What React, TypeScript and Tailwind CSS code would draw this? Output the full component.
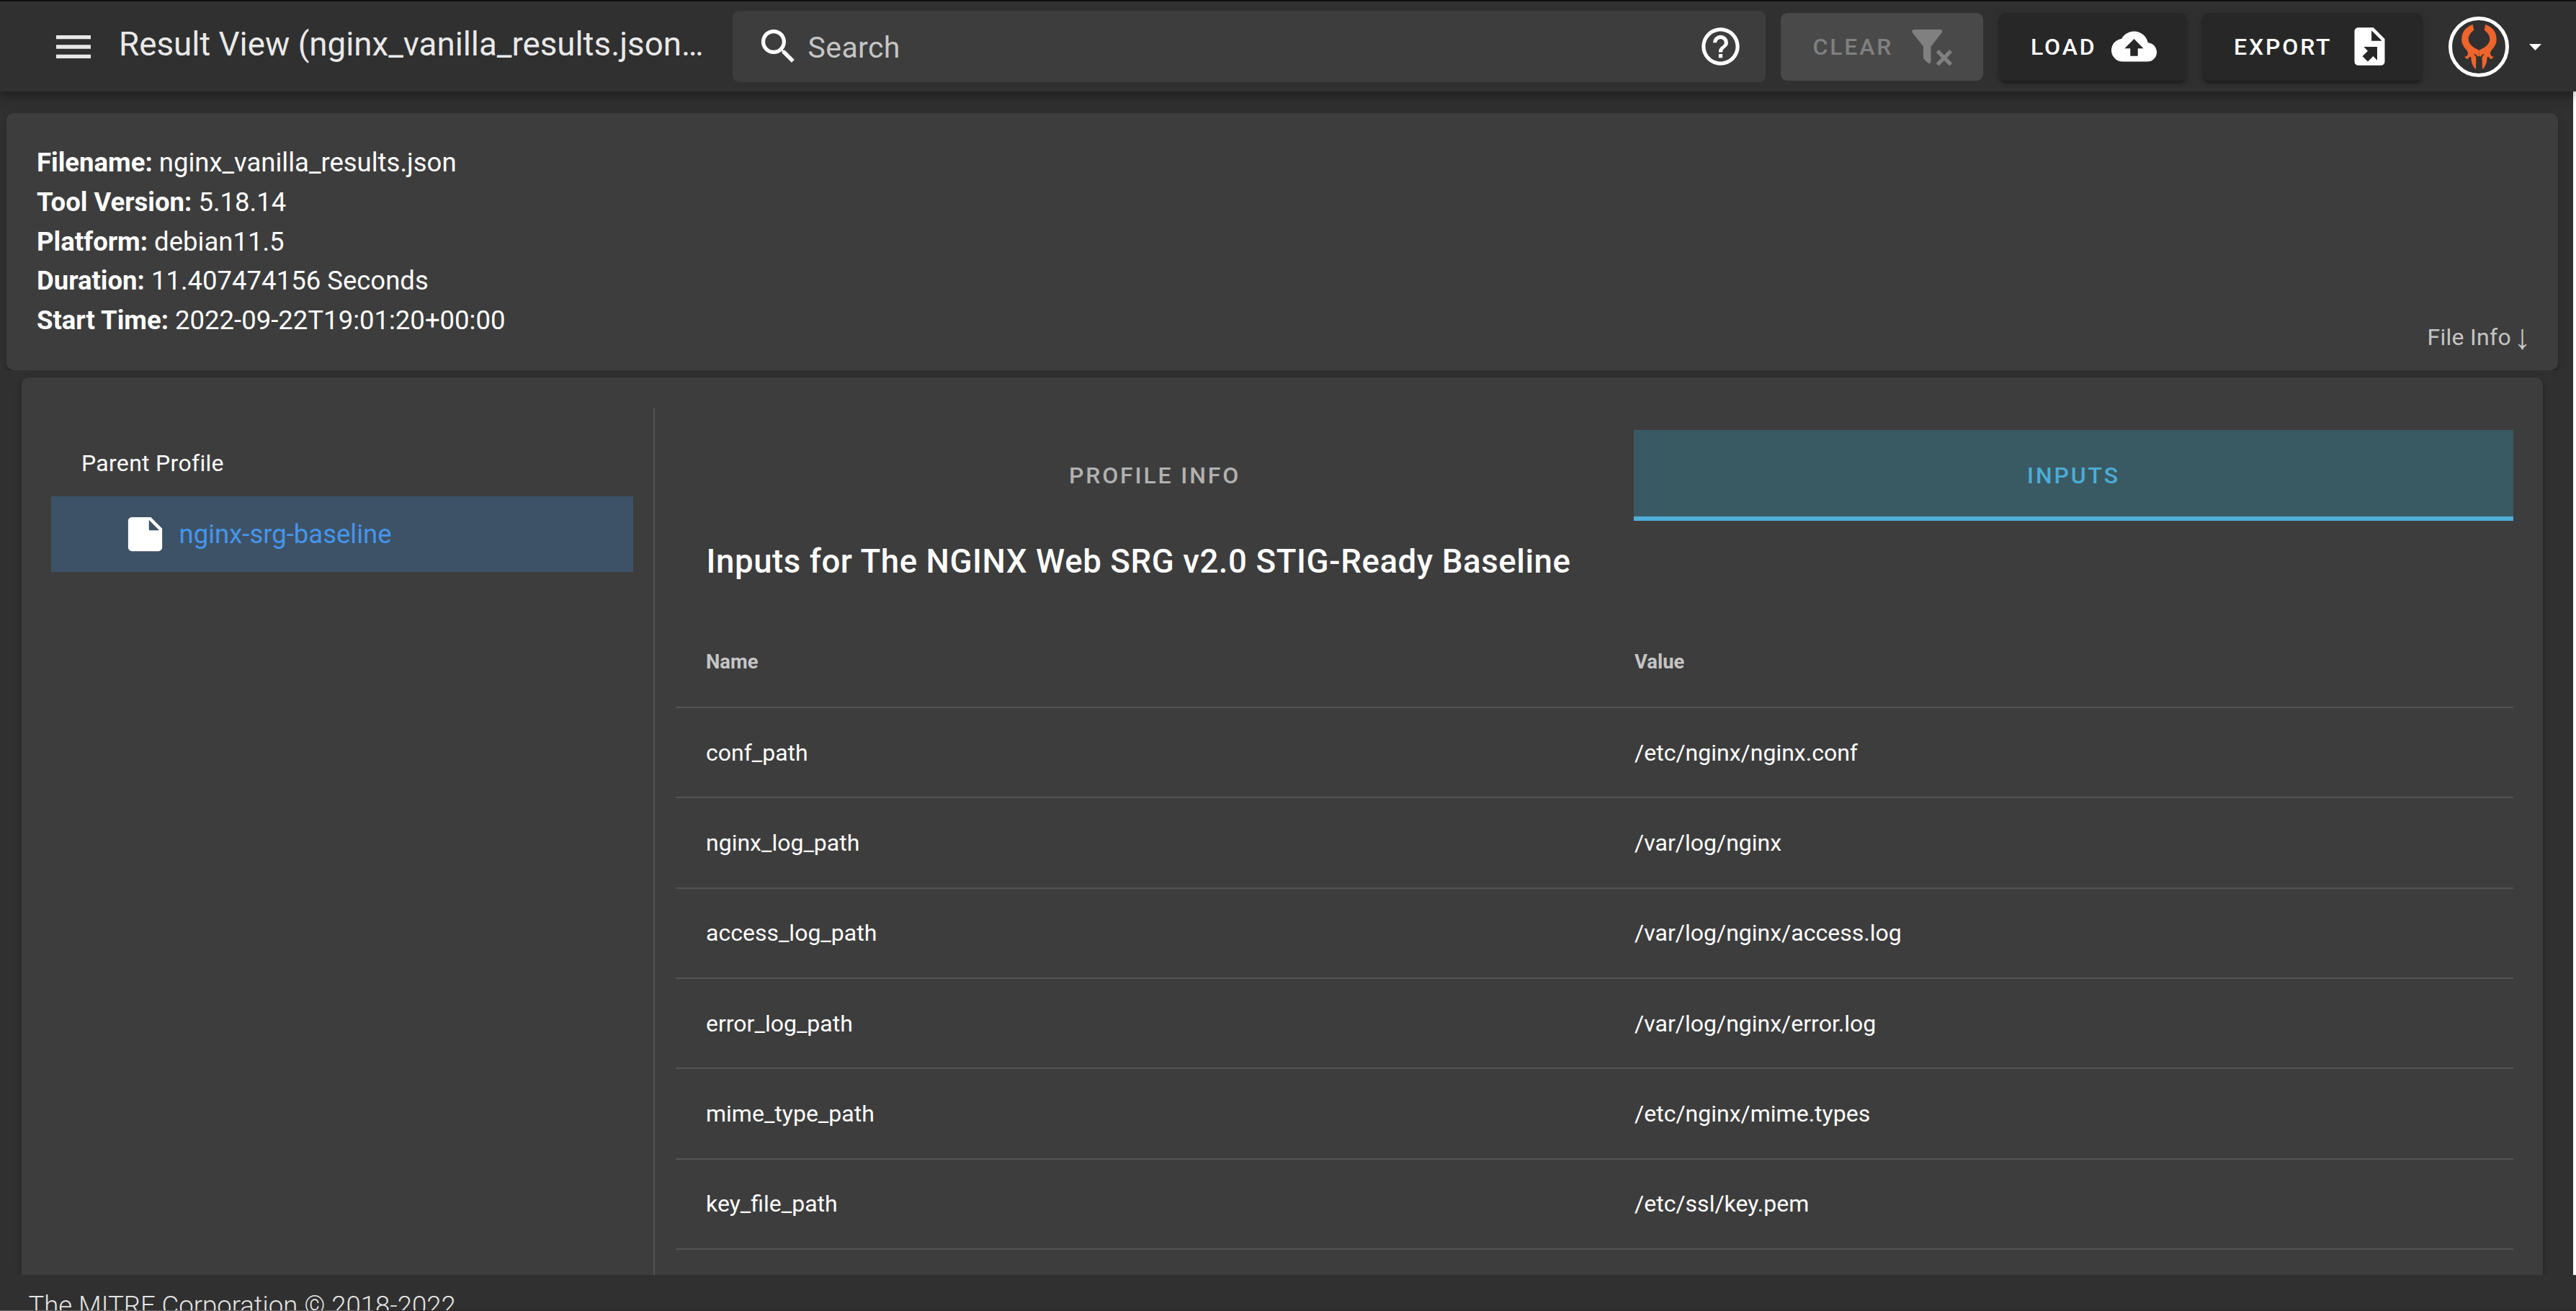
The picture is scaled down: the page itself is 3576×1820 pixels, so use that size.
import React from "react";

const icons = {
  menu: "M3,6H21V8H3V6M3,11H21V13H3V11M3,16H21V18H3V16Z",
  magnify:
    "M9.5,3A6.5,6.5 0 0,1 16,9.5C16,11.11 15.41,12.59 14.44,13.73L14.71,14H15.5L20.5,19L19,20.5L14,15.5V14.71L13.73,14.44C12.59,15.41 11.11,16 9.5,16A6.5,6.5 0 0,1 3,9.5A6.5,6.5 0 0,1 9.5,3M9.5,5C7,5 5,7 5,9.5C5,12 7,14 9.5,14C12,14 14,12 14,9.5C14,7 12,5 9.5,5Z",
  help: "M11,18H13V16H11V18M12,2A10,10 0 0,0 2,12A10,10 0 0,0 12,22A10,10 0 0,0 22,12A10,10 0 0,0 12,2M12,20C7.59,20 4,16.41 4,12C4,7.59 7.59,4 12,4C16.41,4 20,7.59 20,12C20,16.41 16.41,20 12,20M12,6A4,4 0 0,0 8,10H10A2,2 0 0,1 12,8A2,2 0 0,1 14,10C14,12 11,11.75 11,15H13C13,12.75 16,12.5 16,10A4,4 0 0,0 12,6Z",
  filterRemove:
    "M14.76,20.83L17.6,18L14.76,15.17L16.17,13.76L19,16.57L21.83,13.76L23.24,15.17L20.43,18L23.24,20.83L21.83,22.24L19,19.4L16.17,22.24L14.76,20.83M12,12V19.88C12.04,20.18 11.94,20.5 11.71,20.71C11.32,21.1 10.69,21.1 10.3,20.71L8.29,18.7C8.06,18.47 7.96,18.16 8,17.87V12H7.97L2.21,4.62C1.87,4.19 1.95,3.56 2.38,3.22C2.57,3.08 2.78,3 3,3V3H17V3C17.22,3 17.43,3.08 17.62,3.22C18.05,3.56 18.13,4.19 17.79,4.62L12.03,12H12Z",
  cloudUpload:
    "M14,13V17H10V13H7L12,8L17,13M19.35,10.03C18.67,6.59 15.64,4 12,4C9.11,4 6.6,5.64 5.35,8.03C2.34,8.36 0,10.9 0,14A6,6 0 0,0 6,20H19A5,5 0 0,0 24,15C24,12.36 21.95,10.22 19.35,10.03Z",
  fileExport:
    "M6,2C4.89,2 4,2.9 4,4V20A2,2 0 0,0 6,22H18A2,2 0 0,0 20,20V8L14,2M13,3.5L18.5,9H13M8.93,12.22H16V19.29L13.88,17.17L11.05,20L8.22,17.17L11.05,14.35",
  note: "M14,10V4.5L19.5,10M5,3C3.89,3 3,3.89 3,5V19A2,2 0 0,0 5,21H19A2,2 0 0,0 21,19V9L15,3H5Z",
};

function Icon({ path, className = "size-[63px]" }: { path: string; className?: string }) {
  return (
    <svg viewBox="0 0 24 24" fill="currentColor" className={`shrink-0 ${className}`}>
      <path fillRule="evenodd" d={path} />
    </svg>
  );
}

const HORN =
  "M156 72 L161 95 C146 106 137 120 138 135 C140 156 160 169 182.500 179 V203 L176 206 C170 196 164 194 160 196 C170 204 171 212 170 222 L169 257 L164 254 C154 242 149 228 149 208 L143 206 L136 216 L127 213 L122 206 L131 204 L136 195 L135 186 L131 179 C118 165 109 150 110 134 C110 105 125 83 156 72 Z";

function Logo() {
  return (
    <span className="flex size-[84px] shrink-0 items-center justify-center rounded-full border-[5.500px] border-white">
      <svg viewBox="73 54 219 219" className="size-[73px] shrink-0 fill-[#ee642b]">
        <path d={HORN} />
        <path d={HORN} transform="translate(365 0) scale(-1 1)" />
      </svg>
    </span>
  );
}

function BarButton({ label, path, className }: { label: string; path: string; className: string }) {
  return (
    <button
      className={`flex h-[94px] shrink-0 items-center rounded-[9px] pl-[44.500px] text-[32px] leading-[40px] font-medium tracking-[2.850px] ${className}`}
    >
      <span className="mr-[20.500px]">{label}</span>
      <Icon path={path} />
    </button>
  );
}

function TopBar() {
  return (
    <header className="relative z-10 flex h-[127px] shrink-0 items-center border-t-2 border-[#0e0e0e] bg-[#303030] shadow-[0_4.500px_9px_-2px_rgba(0,0,0,0.2),0_9px_11px_rgba(0,0,0,0.14),0_2px_23px_rgba(0,0,0,0.12)]">
      <Icon path={icons.menu} className="ml-[70px] size-[64px] text-[#e8e8e8]" />
      <h1 className="ml-[31px] w-[852px] shrink-0 pb-[5.500px] text-[45.700px] leading-[60px] whitespace-nowrap text-[#e9e9e9]">
        Result View (nginx_vanilla_results.json…
      </h1>
      <div className="flex h-[99px] w-[1434px] shrink-0 items-center rounded-[9px] bg-[#3d3d3d] text-white">
        <Icon path={icons.magnify} className="ml-[31.500px] size-[63px]" />
        <span className="ml-[10px] flex-1 pt-[3px] text-[41px] leading-[48px] tracking-[0.400px] text-[#c5c5c5]">
          Search
        </span>
        <Icon path={icons.help} className="mr-[31.500px] size-[63px]" />
      </div>
      <BarButton
        label="CLEAR"
        path={icons.filterRemove}
        className="ml-[21px] w-[281px] bg-[#494949] text-[#808080]"
      />
      <BarButton
        label="LOAD"
        path={icons.cloudUpload}
        className="ml-[21.500px] w-[261.500px] bg-[#272727] text-white shadow-[0_7px_2px_-4.500px_rgba(0,0,0,0.2),0_4.500px_4.500px_rgba(0,0,0,0.14),0_2px_11px_rgba(0,0,0,0.12)]"
      />
      <BarButton
        label="EXPORT"
        path={icons.fileExport}
        className="ml-[20.500px] w-[306.500px] bg-[#272727] text-white shadow-[0_7px_2px_-4.500px_rgba(0,0,0,0.2),0_4.500px_4.500px_rgba(0,0,0,0.14),0_2px_11px_rgba(0,0,0,0.12)]"
      />
      <button className="ml-[36px] flex items-center gap-[28px]">
        <Logo />
        <svg viewBox="0 0 17 9" className="mt-[2px] h-[9px] w-[17px] fill-white">
          <path d="M0 0H17L8.500 9Z" />
        </svg>
      </button>
    </header>
  );
}

const fileInfo: [string, string][] = [
  ["Filename", "nginx_vanilla_results.json"],
  ["Tool Version", "5.18.14"],
  ["Platform", "debian11.5"],
  ["Duration", "11.407474156 Seconds"],
  ["Start Time", "2022-09-22T19:01:20+00:00"],
];

function FileCard() {
  return (
    <div className="h-[387px] shrink-0 overflow-hidden pt-[30px] pr-[21px] pl-[9px]">
      <section className="flex h-[357px] justify-between rounded-[10px] bg-[#3d3d3d] pt-[42px] pr-[37.500px] pl-[42px] shadow-[0_7px_2px_-4.500px_rgba(0,0,0,0.2),0_4.500px_4.500px_rgba(0,0,0,0.14),0_2px_11px_rgba(0,0,0,0.12)]">
        <div className="text-[36.500px] leading-[54.750px] text-white">
          {fileInfo.map(([label, value]) => (
            <div key={label}>
              <strong className="font-bold">{label}:</strong> {value}
            </div>
          ))}
        </div>
        <button className="flex items-end gap-[3.500px] self-end pb-[25px] text-[32px] leading-[42px] tracking-[0.300px] text-[#c5c5c5]">
          <span>File Info</span>
          <span className="font-['Liberation_Serif',serif] text-[48px] leading-[42px] tracking-normal">↓</span>
        </button>
      </section>
    </div>
  );
}

function ProfileTree() {
  return (
    <aside className="mt-[42px] w-[879px] shrink-0 border-r-2 border-[#545454] pt-[53px] pr-[28px] pl-[41px]">
      <h2 className="h-[70px] pl-[42px] text-[32px] leading-[48px] tracking-[0.300px] text-white">Parent Profile</h2>
      <div className="flex h-[105px] items-center bg-[#3d5266] pl-[99px]">
        <Icon path={icons.note} className="size-[63px] text-white" />
        <span className="ml-[15.500px] text-[36.500px] leading-[48px] text-[#4695eb]">nginx-srg-baseline</span>
      </div>
    </aside>
  );
}

const inputs: [string, string][] = [
  ["conf_path", "/etc/nginx/nginx.conf"],
  ["nginx_log_path", "/var/log/nginx"],
  ["access_log_path", "/var/log/nginx/access.log"],
  ["error_log_path", "/var/log/nginx/error.log"],
  ["mime_type_path", "/etc/nginx/mime.types"],
  ["key_file_path", "/etc/ssl/key.pem"],
];

function InputsPanel() {
  return (
    <div className="flex flex-1 flex-col pt-[73px] pr-[41px] pl-[29px]">
      <nav className="flex h-[126px] text-[32px] leading-[40px] font-medium tracking-[2.850px]">
        <button className="flex w-[1330px] items-center justify-center text-[#b1b1b1]">PROFILE INFO</button>
        <button className="flex flex-1 items-center justify-center border-b-[6px] border-[#4fafd9] bg-[#3a5a63] pt-[6px] text-[#4bacd6]">
          INPUTS
        </button>
      </nav>
      <h3 className="mt-[20px] h-[113px] pl-[42.500px] text-[45.600px] leading-[73px] font-medium tracking-[0.0125em] text-white">
        Inputs for The NGINX Web SRG v2.0 STIG-Ready Baseline
      </h3>
      <div className="flex h-[127px] shrink-0 items-center border-b-2 border-[#545454] pl-[42px] text-[27.400px] leading-[36px] font-bold text-[#c5c5c5]">
        <span className="w-[1289px]">Name</span>
        <span>Value</span>
      </div>
      {inputs.map(([name, value]) => (
        <div
          key={name}
          className="flex h-[125.330px] shrink-0 items-center border-b-2 border-[#545454] pl-[42px] text-[32px] leading-[42px] text-white"
        >
          <span className="w-[1289px]">{name}</span>
          <span>{value}</span>
        </div>
      ))}
    </div>
  );
}

export default function App() {
  return (
    <div className="flex h-[1820px] w-[3576px] flex-col overflow-hidden bg-[#303030] font-[Roboto,sans-serif]">
      <TopBar />
      <main className="flex h-[1643px] shrink-0">
        <div className="flex w-[3572px] flex-col overflow-hidden">
          <FileCard />
          <section className="mt-[10px] mr-[42px] ml-[30px] flex flex-1 rounded-t-[10px] bg-[#3d3d3d] shadow-[0_7px_2px_-4.500px_rgba(0,0,0,0.2),0_4.500px_4.500px_rgba(0,0,0,0.14),0_2px_11px_rgba(0,0,0,0.12)]">
            <ProfileTree />
            <InputsPanel />
          </section>
        </div>
        <div className="w-[4px] bg-white" />
      </main>
      <footer className="h-[49px] shrink-0 overflow-hidden bg-[#303030] pt-[15px] pl-[39.500px] text-[36.500px] leading-[55px] font-light text-[#e4e4e4]">
        The MITRE Corporation © 2018-2022
      </footer>
      <div className="h-px shrink-0 bg-[#2a2628]">
        <div className="h-px w-[518px] bg-[#656363]" />
      </div>
    </div>
  );
}
